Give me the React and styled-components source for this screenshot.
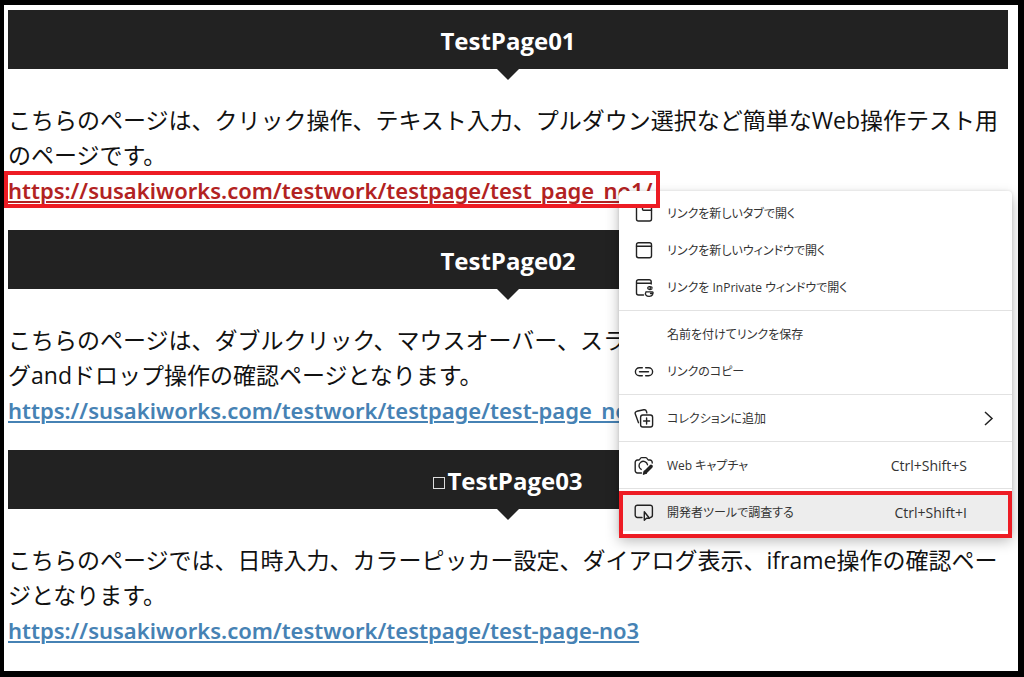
import React from "react";
import styled, { createGlobalStyle } from "styled-components";

const GlobalStyle = createGlobalStyle`
  * { box-sizing: border-box; }
  body {
    margin: 0;
    background: #fff;
    color: #111;
    font-family: "Open Sans", "Noto Sans CJK JP", sans-serif;
  }
`;

const Page = styled.main`
  position: relative;
  min-height: 100vh;
  border: solid #000;
  border-width: 5px 6px 6px 4px;
  padding: 5px 10px 0 4px;
  overflow: hidden;
`;

const Section = styled.section`
  margin-bottom: 22px;
`;

const Heading = styled.h2`
  position: relative;
  display: flex;
  align-items: center;
  justify-content: center;
  height: 59px;
  margin: 0 0 34px;
  padding-top: 2px;
  background: #222;
  color: #fff;
  font-size: 24px;
  font-weight: 700;
  line-height: 34px;

  &::after {
    content: "";
    position: absolute;
    top: 100%;
    left: 50%;
    margin-left: -11px;
    border: 11px solid transparent;
    border-bottom-width: 0;
    border-top-color: #222;
  }
`;

const Missing = styled.span`
  width: 12px;
  height: 12px;
  margin: 5px 2px 0 0;
  border: 1px solid #ddd;
`;

const Text = styled.p`
  margin: 0;
  font-size: 23px;
  font-weight: 400;
  line-height: 35px;
  white-space: nowrap;
`;

const Link = styled.a`
  position: relative;
  display: block;
  width: fit-content;
  color: ${(p) => (p.$active ? "#b22222" : "#4682b4")};
  font-family: "Noto Sans", "Open Sans", sans-serif;
  font-size: 22px;
  font-weight: 600;
  line-height: 35px;
  text-decoration-thickness: 2px;
  text-underline-offset: 2px;
  white-space: nowrap;
`;

const Marker = styled.span`
  position: absolute;
  z-index: 2;
  inset: ${(p) => p.$inset};
  border: 4px solid #ed1c24;
  pointer-events: none;
`;

const Menu = styled.ul`
  position: absolute;
  z-index: 1;
  top: 186px;
  right: 6px;
  width: 393px;
  margin: 0;
  padding: 4px 0;
  list-style: none;
  background: #fff;
  border-radius: 4px;
  box-shadow: 0 6px 14px rgba(0, 0, 0, 0.28), 0 0 3px rgba(0, 0, 0, 0.12);
`;

const Item = styled.li`
  position: relative;
`;

const ItemButton = styled.button`
  display: flex;
  align-items: center;
  width: 100%;
  height: 37px;
  padding: 0 16px 0 15px;
  border: 0;
  background: ${(p) => (p.$hover ? "#ededed" : "transparent")};
  color: #333;
  font-family: "Open Sans", "Noto Sans CJK JP", sans-serif;
  font-size: 12px;
  font-feature-settings: "palt";
  line-height: 20px;
  text-align: left;
`;

const IconSlot = styled.span`
  display: flex;
  width: 20px;
  margin-right: 13px;
`;

const Label = styled.span`
  flex: 1;
`;

const Shortcut = styled.span`
  margin-right: 29px;
  font-size: 14px;
`;

const Divider = styled.li`
  height: 1px;
  margin: 4px 0 5px;
  background: #e2e2e2;
`;

const Svg = ({ children }) => (
  <svg width="20" height="20" viewBox="0 0 20 20" fill="none" stroke="#222" strokeWidth="1.4" strokeLinecap="round" strokeLinejoin="round" aria-hidden="true">
    {children}
  </svg>
);

const icons = {
  tab: (
    <Svg>
      <rect x="2.5" y="1.5" width="15" height="15.5" rx="2" />
      <path d="M8.5 1.5v3.7a1 1 0 0 0 1 1h8" />
    </Svg>
  ),
  window: (
    <Svg>
      <rect x="2.5" y="1.7" width="15" height="15" rx="2" />
      <path d="M2.5 5.3h15" />
    </Svg>
  ),
  inPrivate: (
    <Svg>
      <path d="M17.2 6V3.7a2 2 0 0 0-2-2H4.500a2 2 0 0 0-2 2V15a2 2 0 0 0 2 2h5M2.500 5.300h14.700" />
      <path d="M18 9.300c-1.800-1.300-4.300-.8-4.300.7s2.400 2.100 4.300.8M16 10h.4M12 13.800h6.500c.8 0 .8 1.700 0 1.700h-2M12 13.800c-1.500 2.500.2 4.600 3.200 4.600 1.600 0 2.800-.6 3.500-1.800" strokeWidth="1.3" />
    </Svg>
  ),
  link: (
    <Svg>
      <path d="M8.300 5.700H5.400a4 4 0 0 0 0 8h2.900M11.700 5.700h2.900a4 4 0 0 1 0 8h-2.900M5.500 9.700h9" />
    </Svg>
  ),
  collection: (
    <Svg>
      <path d="M4.500 13.700 1.300 5.100C.8 3.700 1.500 2.700 2.800 2.300l7-1.500c1.300-.3 2.300.4 2.700 1.700l.3 1.300" />
      <rect x="6.600" y="6" width="12" height="12" rx="2.200" />
      <path d="M12.600 9v6M9.600 12h6" />
    </Svg>
  ),
  capture: (
    <Svg>
      <path d="M7.500 17H3.400a2.200 2.200 0 0 1-2.200-2.200V6.200A2.200 2.200 0 0 1 3.400 4h1.600c1 0 1-2.400 2.600-2.400h4.200C13.400 1.600 13.400 4 14.400 4h1.600A2.200 2.200 0 0 1 18.200 6.200v.8" />
      <path d="M7.200 13.400a4.300 4.300 0 1 1 6.300-4.700" />
      <path d="M11.500 16 17 10.500" strokeWidth="3.6" />
      <path d="M9.500 18.200 10.300 15.200l2 2Z" fill="#222" />
    </Svg>
  ),
  inspect: (
    <Svg>
      <path d="M8 14.500H3.400A2.200 2.200 0 0 1 1.200 12.300V4.400a2.200 2.200 0 0 1 2.200-2.200h12.800a2.200 2.200 0 0 1 2.200 2.200v7.900a2.200 2.200 0 0 1-2 2.200" />
      <path d="M10.300 8.800v8.500l2.200-2.100h3Z" />
    </Svg>
  ),
};

const MenuItem = ({ icon, label, shortcut, submenu, hover, marked }) => (
  <Item>
    <ItemButton type="button" $hover={hover}>
      <IconSlot>{icons[icon]}</IconSlot>
      <Label>{label}</Label>
      {shortcut && <Shortcut>{shortcut}</Shortcut>}
      {submenu && (
        <svg width="14" height="18" viewBox="0 0 14 18" fill="none" stroke="#222" strokeWidth="1.5" aria-hidden="true">
          <path d="m3 2 7 6.500-7 6.500" />
        </svg>
      )}
    </ItemButton>
    {marked && <Marker $inset="-3px 0 -7px 0" />}
  </Item>
);

export default function App() {
  return (
    <>
      <GlobalStyle />
      <Page>
        <Section>
          <Heading>TestPage01</Heading>
          <Text>
            こちらのページは、クリック操作、テキスト入力、プルダウン選択など簡単なWeb操作テスト用
            <br />
            のページです。
          </Text>
          <Link $active href="https://susakiworks.com/testwork/testpage/test_page_no1/">
            https://susakiworks.com/testwork/testpage/test_page_no1/
            <Marker $inset="-2px -8px 0 -4px" />
          </Link>
        </Section>
        <Section>
          <Heading>TestPage02</Heading>
          <Text>
            こちらのページは、ダブルクリック、マウスオーバー、スライダー操作、ドラッ
            <br />
            グandドロップ操作の確認ページとなります。
          </Text>
          <Link href="https://susakiworks.com/testwork/testpage/test-page_no2">
            https://susakiworks.com/testwork/testpage/test-page_no2
          </Link>
        </Section>
        <Section>
          <Heading>
            <Missing />
            TestPage03
          </Heading>
          <Text>
            こちらのページでは、日時入力、カラーピッカー設定、ダイアログ表示、iframe操作の確認ペー
            <br />
            ジとなります。
          </Text>
          <Link href="https://susakiworks.com/testwork/testpage/test-page-no3">
            https://susakiworks.com/testwork/testpage/test-page-no3
          </Link>
        </Section>

        <Menu>
          <MenuItem icon="tab" label="リンクを新しいタブで開く" />
          <MenuItem icon="window" label="リンクを新しいウィンドウで開く" />
          <MenuItem icon="inPrivate" label="リンクを InPrivate ウィンドウで開く" />
          <Divider />
          <MenuItem label="名前を付けてリンクを保存" />
          <MenuItem icon="link" label="リンクのコピー" />
          <Divider />
          <MenuItem icon="collection" label="コレクションに追加" submenu />
          <Divider />
          <MenuItem icon="capture" label="Web キャプチャ" shortcut="Ctrl+Shift+S" />
          <Divider />
          <MenuItem icon="inspect" label="開発者ツールで調査する" shortcut="Ctrl+Shift+I" hover marked />
        </Menu>
      </Page>
    </>
  );
}
